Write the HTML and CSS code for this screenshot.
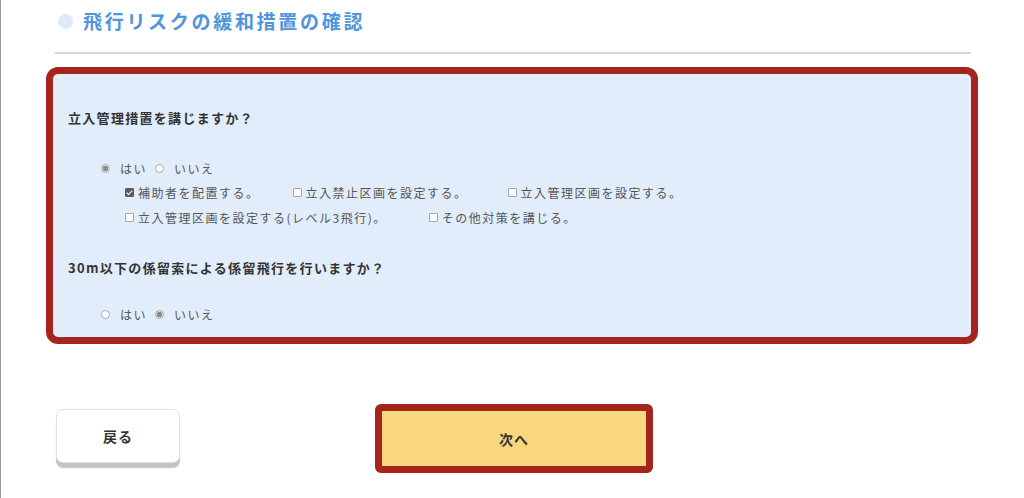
FILE: index.html
```html
<!DOCTYPE html>
<html lang="ja">
<head>
    <meta charset="UTF-8">
    <meta name="viewport" content="width=device-width, initial-scale=1.0">
    <title>飛行リスクの緩和措置の確認</title>
    <link rel="stylesheet" href="styles.css">
</head>
<body>
    <div class="page">
        <h2 class="heading"><span class="dot"></span>飛行リスクの緩和措置の確認</h2>
        <div class="rule"></div>

        <form class="panel" action="">
            <p class="question">立入管理措置を講じますか？</p>
            <div class="row radios">
                <label><input type="radio" name="q1" checked>はい</label>
                <label><input type="radio" name="q1">いいえ</label>
            </div>
            <div class="row checks">
                <label class="c1"><input type="checkbox" checked>補助者を配置する。</label>
                <label class="c2"><input type="checkbox">立入禁止区画を設定する。</label>
                <label><input type="checkbox">立入管理区画を設定する。</label>
            </div>
            <div class="row checks second">
                <label class="c3"><input type="checkbox">立入管理区画を設定する(レベル3飛行)。</label>
                <label><input type="checkbox">その他対策を講じる。</label>
            </div>

            <p class="question q2">30m以下の係留索による係留飛行を行いますか？</p>
            <div class="row radios last">
                <label><input type="radio" name="q2">はい</label>
                <label><input type="radio" name="q2" checked>いいえ</label>
            </div>
        </form>

        <div class="buttons">
            <button class="btn back" type="button">戻る</button>
            <button class="btn next" type="button">次へ</button>
        </div>
    </div>
</body>
</html>
```

FILE: styles.css
```css
*{
    box-sizing: border-box;
}
html, body{
    height: 100%;
}
body{
    margin: 0;
    font-family: "Noto Sans CJK JP", "Liberation Sans", sans-serif;
    border-left: 1px solid #9a9a9a;
    background: #fff;
}
.page{
    padding: 0 46px 0 45px;
}

/* heading */
.heading{
    display: flex;
    align-items: center;
    margin: 0 0 0 12px;
    padding-top: 7px;
    height: 35px;
    font-size: 19px;
    line-height: 28px;
    letter-spacing: 2.7px;
    font-weight: bold;
    color: #5195dc;
}
.dot{
    width: 15px;
    height: 15px;
    border-radius: 50%;
    background: #dde9f8;
    margin-right: 10px;
}
.rule{
    margin: 17px 7px 0 9px;
    border-top: 2px solid #d6d6d6;
}

/* panel */
.panel{
    margin-top: 13px;
    height: 277px;
    border: 7px solid #a5241b;
    border-radius: 12px;
    background: #e1edfb;
    padding: 34px 0 0 15px;
    color: #555;
}
.question{
    margin: 0;
    font-size: 13px;
    line-height: 20px;
    letter-spacing: 1.3px;
    font-weight: bold;
    color: #333;
}
.q2{
    margin-top: 29px;
}
.row{
    display: flex;
    align-items: center;
    height: 24px;
    font-size: 12px;
    letter-spacing: 1.5px;
}
.row label{
    display: flex;
    align-items: center;
}
.radios{
    margin-top: 28px;
    padding-left: 33px;
}
.radios label + label{
    margin-left: 8px;
}
.radios.last{
    margin-top: 24px;
}
.checks{
    padding-left: 57px;
}
.checks.second{
    margin-top: 1px;
}
.c1{ margin-right: 33px; }
.c2{ margin-right: 40px; }
.c3{ margin-right: 42px; }

input[type="radio"], input[type="checkbox"]{
    appearance: none;
    -webkit-appearance: none;
    margin: 0;
    width: 9px;
    height: 9px;
    background: #fff;
    border: 1px solid #a8a8a8;
    flex: none;
}
input[type="radio"]{
    border-radius: 50%;
    margin-right: 10px;
}
input[type="radio"]:checked{
    background: radial-gradient(circle, #8a8a8a 0 2.5px, #e6e6e6 3px);
}
input[type="checkbox"]{
    border-radius: 1px;
    margin-right: 4px;
}
input[type="checkbox"]:checked{
    background: #5c5c5c;
    border-color: #5c5c5c;
    position: relative;
}
input[type="checkbox"]:checked::after{
    content: "";
    position: absolute;
    left: 2px;
    top: 0px;
    width: 2px;
    height: 5px;
    border: solid #fff;
    border-width: 0 1.5px 1.5px 0;
    transform: rotate(45deg);
}

/* buttons */
.buttons{
    display: flex;
    align-items: center;
    margin-top: 60px;
    padding-left: 10px;
}
button{
    font-family: inherit;
    font-size: 14px;
    font-weight: bold;
    color: #333;
    letter-spacing: 1px;
    cursor: pointer;
}
.back{
    width: 124px;
    height: 54px;
    background: #fff;
    border: 1px solid #e2e2e2;
    border-radius: 7px;
    box-shadow: 0 5px 1px #c4c4c4;
    margin-bottom: 5px;
}
.next{
    margin-left: 195px;
    width: 278px;
    height: 69px;
    background: #f8d77f;
    border: 7px solid #a5241b;
    border-radius: 6px;
}
```
